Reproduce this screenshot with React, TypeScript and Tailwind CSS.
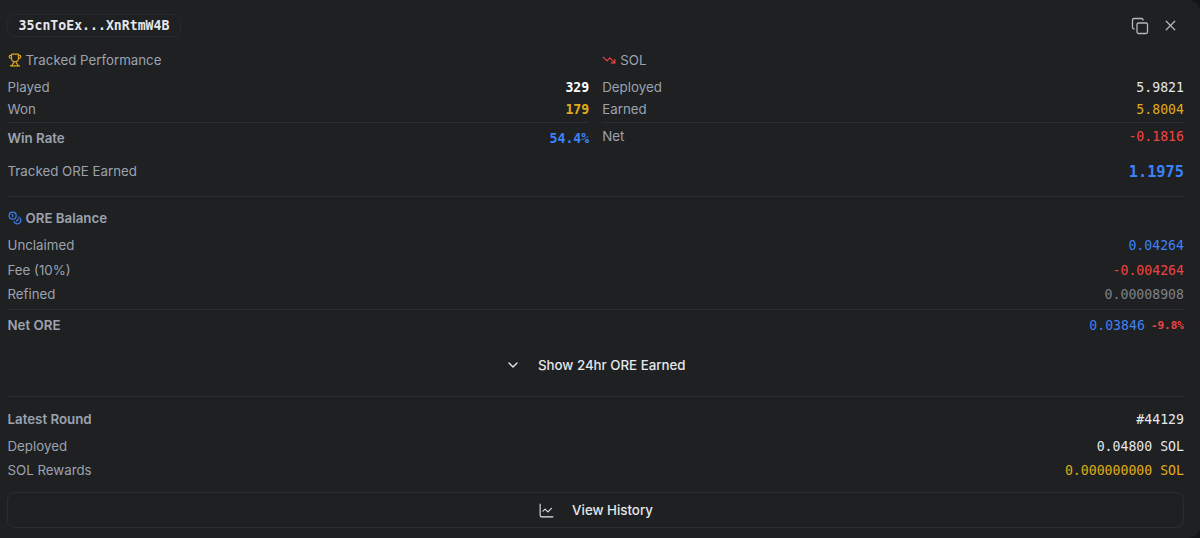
import { ChartLine, ChevronDown, Copy, Coins, TrendingDown, Trophy, X } from 'lucide-react';
import type { ReactNode } from 'react';

const mono = "font-['DejaVu_Sans_Mono','Liberation_Mono',monospace] text-[13.2px] translate-y-px";

function Row({ label, value, className }: { label: ReactNode; value: ReactNode; className: string }) {
  return (
    <div className="flex items-center justify-between">
      <span className="text-[#9ca3af]">{label}</span>
      <span className={`${mono} ${className}`}>{value}</span>
    </div>
  );
}

function Divider() {
  return <div className="h-px bg-[#2c2d30]" />;
}

export default function App() {
  return (
    <div className="h-[538px] w-[1200px] overflow-hidden bg-[#141517] font-['Inter',sans-serif] text-[13.3px] leading-[20px]">
      <div className="flex h-full flex-col rounded-r-xl bg-[#1f2022] pl-[7.5px] pr-[16px] pt-[14px]">
        <div className="flex items-center justify-between">
          <div className={`${mono} !translate-y-0 -ml-[0.5px] flex h-[23px] w-[174px] items-center justify-center rounded-lg border border-[#28292c] font-bold text-[#e5e7eb]`}>
            35cnToEx...XnRtmW4B
          </div>
          <div className="flex items-center gap-[13px] pr-[5px] text-[#b4b7bc]">
            <Copy className="h-[18px] w-[18px]" strokeWidth={1.75} />
            <X className="h-[17px] w-[17px]" strokeWidth={1.75} />
          </div>
        </div>

        <div className="mt-[13px] grid grid-cols-2 gap-x-[13px]">
          <div className="flex flex-col">
            <div className="flex h-[20px] items-center gap-[4px] text-[#9ca3af]">
              <Trophy className="h-[14px] w-[14px] text-[#e0ab1a]" />
              <span>Tracked Performance</span>
            </div>
            <div className="mt-[7px] flex flex-col gap-[2px]">
              <Row label="Played" value="329" className="font-bold text-white" />
              <Row label="Won" value="179" className="font-bold text-[#e0ab1a]" />
            </div>
            <div className="mt-[3px] h-px bg-[#2c2d30]" />
            <div className="mt-[5px] flex items-center justify-between">
              <span className="font-semibold text-[#9ca3af]">Win Rate</span>
              <span className={`${mono} font-bold text-[#3b82f6]`}>54.4%</span>
            </div>
          </div>
          <div className="flex flex-col">
            <div className="flex h-[20px] items-center gap-[4px] text-[#9ca3af]">
              <TrendingDown className="h-[14px] w-[14px] text-[#ef4444]" />
              <span>SOL</span>
            </div>
            <div className="mt-[7px] flex flex-col gap-[2px]">
              <Row label="Deployed" value="5.9821" className="text-[#e5e7eb]" />
              <Row label="Earned" value="5.8004" className="text-[#e0ab1a]" />
            </div>
            <div className="mt-[3px] h-px bg-[#2c2d30]" />
            <div className="mt-[3px]">
              <Row label="Net" value="-0.1816" className="text-[#ef4444]" />
            </div>
          </div>
        </div>

        <div className="mt-[13px] flex items-center justify-between">
          <span className="text-[#9ca3af]">Tracked ORE Earned</span>
          <span className={`${mono} !text-[15.3px] font-bold text-[#3b82f6]`}>1.1975</span>
        </div>

        <div className="mt-[15px]">
          <Divider />
        </div>

        <div className="mt-[11px] flex h-[20px] items-center gap-[4px] font-semibold text-[#9ca3af]">
          <Coins className="h-[14px] w-[14px] text-[#3b82f6]" />
          <span>ORE Balance</span>
        </div>
        <div className="mt-[7px] flex flex-col gap-[4.5px]">
          <Row label="Unclaimed" value="0.04264" className="text-[#3b82f6]" />
          <Row label="Fee (10%)" value="-0.004264" className="text-[#ef4444]" />
          <Row label="Refined" value="0.00008908" className="text-[#7c828c]" />
        </div>
        <div className="mt-[5px]">
          <Divider />
        </div>
        <div className="mt-[5px] flex items-center justify-between">
          <span className="font-semibold text-[#9ca3af]">Net ORE</span>
          <span className="flex items-center gap-[6px]">
            <span className={`${mono} text-[#3b82f6]`}>0.03846</span>
            <span className={`${mono} !text-[11px] font-bold text-[#ef4444]`}>-9.8%</span>
          </span>
        </div>

        <div className="mt-[20px] flex items-center justify-center gap-[17px] pr-[1px] font-medium text-[#e5e7eb]">
          <ChevronDown className="h-[16px] w-[16px]" />
          <span>Show 24hr ORE Earned</span>
        </div>

        <div className="mt-[21px]">
          <Divider />
        </div>

        <div className="mt-[12px] flex items-center justify-between">
          <span className="font-semibold text-[#9ca3af]">Latest Round</span>
          <span className={`${mono} text-[#e5e7eb]`}>#44129</span>
        </div>
        <div className="mt-[7px] flex flex-col gap-[4px]">
          <Row label="Deployed" value="0.04800 SOL" className="text-[#e5e7eb]" />
          <Row label="SOL Rewards" value="0.000000000 SOL" className="text-[#e0ab1a]" />
        </div>

        <button className="-ml-[0.5px] mt-[12px] flex h-[36px] items-center justify-center gap-[17px] rounded-lg border border-[#2c2d30] font-medium text-[#e5e7eb]">
          <ChartLine className="h-[17px] w-[17px]" strokeWidth={1.5} />
          <span>View History</span>
        </button>
      </div>
    </div>
  );
}
